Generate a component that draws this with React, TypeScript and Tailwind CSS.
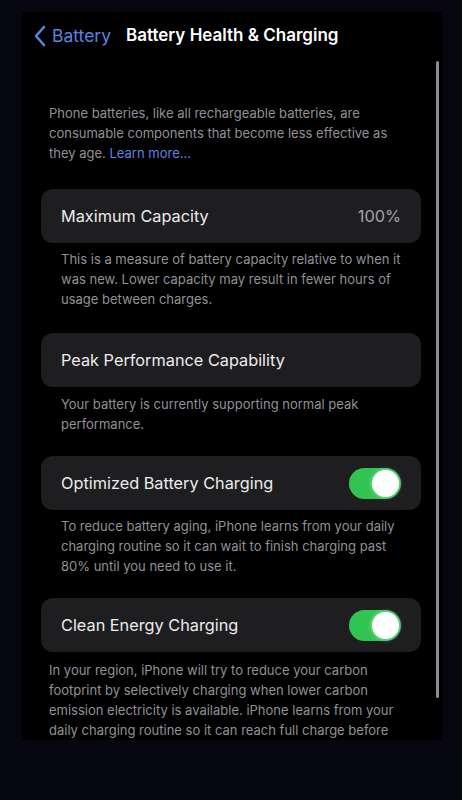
import type { FC } from 'react';

const Toggle: FC = () => (
  <div className="flex h-[31px] w-[52px] items-center justify-end rounded-full bg-[#32c453] p-[2px]">
    <div className="h-[27px] w-[27px] rounded-full bg-white shadow-[0_0_4px_rgba(255,255,255,0.6)]" />
  </div>
);

const Card: FC<{ title: string; right?: React.ReactNode }> = ({ title, right }) => (
  <div className="flex h-[54px] items-center justify-between rounded-[12px] bg-[#1e1e20] pl-[20px] pr-[20px]">
    <span className="text-[16.3px] text-[#ececee]">{title}</span>
    {right}
  </div>
);

const Note: FC<{ children: React.ReactNode; className?: string }> = ({ children, className }) => (
  <p className={`text-[13px] leading-[20px] text-[#919196] ${className ?? ''}`}>{children}</p>
);

export default function App() {
  return (
    <div className="h-[800px] w-[462px] bg-[#05060e] pt-[12px] pl-[22px] font-['Inter','Liberation_Sans',sans-serif]">
      <div className="relative h-[728px] w-[420px] overflow-hidden bg-black">
        <header className="flex h-[48px] items-center pl-[11px]">
          <svg width="14" height="22" viewBox="0 0 14 22">
            <path d="M11 2 L3 11 L11 20" fill="none" stroke="#5b84e0" strokeWidth="2.6" strokeLinecap="round" strokeLinejoin="round" />
          </svg>
          <span className="ml-[5px] text-[17.5px] text-[#5b84e0]">Battery</span>
          <span className="ml-[15px] text-[17px] font-semibold text-white">Battery Health &amp; Charging</span>
        </header>

        <div className="flex flex-col pr-[21px] pl-[19px] pt-[43px]">
          <Note className="pl-[8px] pr-[20px]">
            Phone batteries, like all rechargeable batteries, are consumable components that become less effective as
            they age. <span className="text-[#5b84e0]">Learn more...</span>
          </Note>

          <div className="mt-[26px]">
            <Card title="Maximum Capacity" right={<span className="text-[16.3px] text-[#a4a4a8]">100%</span>} />
            <Note className="mt-[6px] pl-[20px] pr-[8px]">
              This is a measure of battery capacity relative to when it was new. Lower capacity may result in fewer hours of
              usage between charges.
            </Note>
          </div>

          <div className="mt-[24px]">
            <Card title="Peak Performance Capability" />
            <Note className="mt-[7px] pl-[20px] pr-[8px]">
              Your battery is currently supporting normal peak performance.
            </Note>
          </div>

          <div className="mt-[22px]">
            <Card title="Optimized Battery Charging" right={<Toggle />} />
            <Note className="mt-[6px] pl-[20px] pr-[8px]">
              To reduce battery aging, iPhone learns from your daily charging routine so it can wait to finish charging past
              80% until you need to use it.
            </Note>
          </div>

          <div className="mt-[22px]">
            <Card title="Clean Energy Charging" right={<Toggle />} />
            <Note className="mt-[8px] pl-[8px] pr-[24px]">
              In your region, iPhone will try to reduce your carbon footprint by selectively charging when lower carbon
              emission electricity is available. iPhone learns from your daily charging routine so it can reach full charge
              before it is needed.
            </Note>
          </div>
        </div>

        <div className="absolute top-[49px] left-[414px] h-[637px] w-[3px] rounded-full bg-[#8c8c8c]" />
      </div>
    </div>
  );
}
